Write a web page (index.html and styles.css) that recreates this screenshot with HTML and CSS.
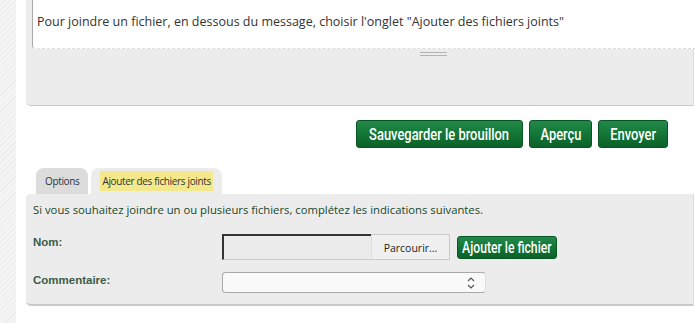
FILE: index.html
```html
<!DOCTYPE html>
<html lang="fr">
<head>
<meta charset="UTF-8" />
<meta name="viewport" content="width=device-width, initial-scale=1.0">
<title>Répondre au message</title>
<link rel="stylesheet" href="styles.css">
</head>
<body>
<div class="page">
    <div class="rail"></div>
    <main class="content">
        <!-- editor -->
        <div class="editor-panel">
            <div class="message-box">
                <p>Pour joindre un fichier, en dessous du message, choisir l'onglet "Ajouter des fichiers joints"</p>
            </div>
            <div class="grip"></div>
        </div>

        <div class="actions">
            <button type="button" class="btn btn-save"><span>Sauvegarder le brouillon</span></button>
            <button type="button" class="btn btn-preview"><span>Aperçu</span></button>
            <button type="button" class="btn btn-send"><span>Envoyer</span></button>
        </div>

        <!-- tabs -->
        <div class="tabs">
            <div class="tab">Options</div>
            <div class="tab active"><span>Ajouter des fichiers joints</span></div>
        </div>
        <div class="tab-panel">
            <p class="intro">Si vous souhaitez joindre un ou plusieurs fichiers, complétez les indications suivantes.</p>
            <div class="row row-name">
                <label class="label">Nom:</label>
                <div class="field">
                    <div class="file-input">
                        <div class="file-name"></div>
                        <div class="file-browse">Parcourir...</div>
                    </div>
                    <button type="button" class="btn btn-small"><span>Ajouter le fichier</span></button>
                </div>
            </div>
            <div class="row row-comment">
                <label class="label">Commentaire:</label>
                <div class="field">
                    <div class="comment-select">
                        <svg width="8" height="14" viewBox="0 0 8 14"><path d="M1 5 L4 2 L7 5 M1 9 L4 12 L7 9" fill="none" stroke="#555" stroke-width="1.2"/></svg>
                    </div>
                </div>
            </div>
        </div>
    </main>
</div>
</body>
</html>
```

FILE: styles.css
```css
body {
    margin: 0;
    background: #fff;
    font-family: 'Open Sans', sans-serif;
    color: #333;
}
.page {
    display: flex;
    height: 323px;
    overflow: hidden;
}
.rail {
    width: 16px;
    flex-shrink: 0;
    background: repeating-linear-gradient(135deg, #f4f4f4 0 3px, #ececec 3px 4px);
}
.content {
    margin-left: 10px;
    width: 668px;
}
.editor-panel {
    background: #ececec;
    height: 105px;
    border-bottom: 1px solid #c9c9c9;
    border-right: 1px solid #dcdcdc;
    border-radius: 0 0 0 5px;
    padding-left: 5px;
}
.message-box {
    background: #fff;
    height: 48px;
    margin-right: -2px;
    border-left: 1px solid #a9a9a9;
    border-bottom: 1px dashed #dedede;
    border-radius: 0 0 0 4px;
    margin-left: 1px;
}
.message-box p {
    margin: 0;
    padding: 13px 0 0 4px;
    font-size: 12.5px;
    line-height: 18px;
}
.grip {
    width: 27px;
    height: 2px;
    margin: 3px 0 0 389px;
    border-top: 1px solid #b3b3b3;
    border-bottom: 1px solid #b3b3b3;
}
.actions {
    display: flex;
    justify-content: flex-end;
    gap: 6px;
    padding: 14px 26px 0 0;
}
.btn {
    height: 28px;
    padding: 0;
    border: 1px solid #0a5524;
    border-radius: 3px;
    background: linear-gradient(#23894a, #137638 50%, #0b6129);
    color: #fff;
    font-family: Roboto, 'Liberation Sans', sans-serif;
    font-weight: 500;
    font-size: 17px;
    white-space: nowrap;
    display: flex;
    justify-content: center;
    align-items: center;
    overflow: hidden;
    cursor: pointer;
}
.btn span {
    display: inline-block;
    transform: scaleX(0.76);
}
.btn-save {
    width: 167px;
}
.btn-preview {
    width: 63px;
}
.btn-send {
    width: 70px;
}
.tabs {
    display: flex;
    gap: 3px;
    margin: 20px 0 0 10px;
}
.tab {
    height: 26px;
    padding: 0 9px;
    background: #dcdcdc;
    border-radius: 8px 8px 0 0;
    font-size: 10px;
    letter-spacing: -0.35px;
    line-height: 27px;
    color: #333;
}
.tab.active {
    background: #ececec;
}
.tab.active span {
    background: #f3e98c;
    padding: 3px 2px;
}
.tab-panel {
    background: #ececec;
    height: 110px;
    border-bottom: 2px solid #c9c9c9;
    border-right: 1px solid #dcdcdc;
    border-radius: 4px 0 0 5px;
    padding: 0 0 0 7px;
}
.intro {
    margin: 0;
    padding-top: 8px;
    font-size: 11.3px;
    line-height: 16px;
    color: #17472a;
}
.row {
    display: flex;
    align-items: flex-start;
}
.row-name {
    margin-top: 16px;
}
.row-comment {
    margin-top: 12px;
}
.label {
    width: 189px;
    font-family: 'Liberation Sans', sans-serif;
    font-weight: 700;
    font-size: 11.5px;
    color: #3b5c48;
    padding-top: 2px;
}
.field {
    display: flex;
    gap: 7px;
    align-items: center;
}
.file-input {
    display: flex;
    height: 26px;
    width: 228px;
}
.file-name {
    width: 147px;
    background: #ebebeb;
    border-top: 2px solid #333;
    border-left: 2px solid #333;
    border-bottom: 1px solid #ccc;
}
.file-browse {
    flex: 1;
    background: #f0f0f0;
    border: 1px solid #c9c9c9;
    border-left: 1px solid #ddd;
    font-size: 10.5px;
    line-height: 26px;
    text-align: center;
    color: #222;
}
.btn-small {
    width: 100px;
    height: 23px;
    font-size: 16px;
}
.comment-select {
    box-sizing: border-box;
    width: 264px;
    height: 21px;
    border: 1px solid #a9a9a9;
    border-right-color: #ddd;
    border-radius: 4px;
    background: #f9f9f9;
    display: flex;
    justify-content: flex-end;
    align-items: center;
    padding-right: 10px;
}
```
